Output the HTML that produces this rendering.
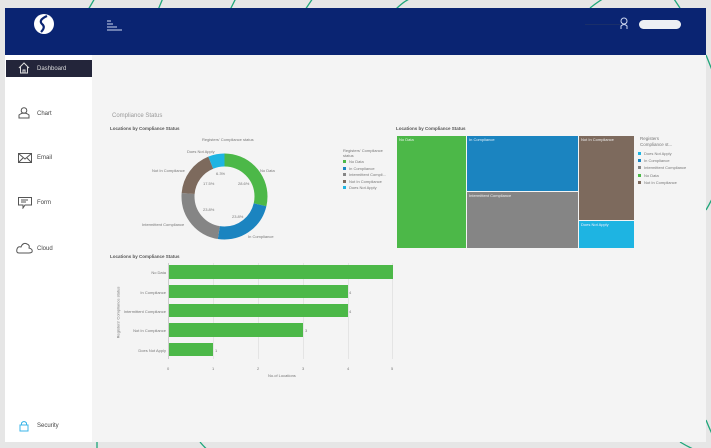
<!DOCTYPE html>
<html><head><meta charset="utf-8"><style>
*{margin:0;padding:0;box-sizing:border-box}
body{width:711px;height:448px;background:#e6e6e6;position:relative;overflow:hidden;font-family:"Liberation Sans",sans-serif;color:#555}
.abs{position:absolute}
.t{position:absolute;font-size:4px;color:#777;white-space:nowrap}
.nav{position:absolute;left:37px;font-size:6px;color:#444}
</style></head><body>
<svg class="abs" style="left:0;top:0" width="711" height="448">
<g fill="none" stroke="#1fa67a" stroke-width="1.3">
<path d="M88 10 L95 -2"/><path d="M158 10 L163 -2"/><path d="M230 10 L236 -2"/><path d="M305 10 L313 -2"/><path d="M395 10 Q405 0 412 -2"/>
<path d="M590 8 Q600 0 608 -4"/><path d="M680 8 L672 -4"/>
<path d="M706 55 Q712 70 716 80"/><path d="M706 210 Q712 200 716 190"/><path d="M706 420 Q710 430 714 438"/>
<path d="M97 442 L97 452"/><path d="M200 442 Q205 448 210 452"/><path d="M680 442 Q690 448 700 452"/>
</g></svg>
<div class="abs" style="left:5px;top:8px;width:701px;height:47px;background:#0a2472"></div>
<div class="abs" style="left:5px;top:55px;width:87px;height:387px;background:#fff"></div>
<div class="abs" style="left:92px;top:55px;width:614px;height:387px;background:#f4f4f4"></div>
<!-- logo -->
<svg class="abs" style="left:33px;top:13px" width="22" height="22"><circle cx="11" cy="11" r="10" fill="#fff"/><path d="M14 3 Q5 7 9 11 Q13 14 8 19" stroke="#0a2472" stroke-width="2.2" fill="none"/></svg>
<svg class="abs" style="left:107px;top:20px" width="16" height="12"><g stroke="#cfd8f0" stroke-width="1"><line x1="0" y1="1" x2="4" y2="1"/><line x1="0" y1="4" x2="6" y2="4"/><line x1="0" y1="7" x2="10" y2="7"/><line x1="0" y1="10" x2="15" y2="10"/></g></svg>
<div class="abs" style="left:585px;top:24px;width:35px;height:1px;background:#1a2f6a"></div>
<svg class="abs" style="left:620px;top:17px" width="10" height="13"><circle cx="4" cy="4" r="3" fill="none" stroke="#cfd8f0" stroke-width="1"/><path d="M1 12 V9 Q4 6 7 9 V12" fill="none" stroke="#cfd8f0" stroke-width="1"/></svg>
<div class="abs" style="left:639px;top:20px;width:42px;height:9px;border-radius:5px;background:#eef0f4"></div>
<!-- sidebar -->
<div class="abs" style="left:6px;top:60px;width:86px;height:17px;background:#23253a"></div>
<svg class="abs" style="left:18px;top:62px" width="12" height="12"><path d="M1 6 L6 1 L11 6 M2.5 5 V11 H9.5 V5 M5 11 V8 H7 V11" fill="none" stroke="#ddd" stroke-width="1"/></svg>
<div class="nav" style="top:66px;color:#ddd">Dashboard</div>
<svg class="abs" style="left:18px;top:107px" width="12" height="12"><circle cx="6" cy="3.5" r="2.8" fill="none" stroke="#555"/><path d="M1 11 V8 Q6 4 11 8 V11 Z" fill="none" stroke="#555"/></svg>
<div class="nav" style="top:111px">Chart</div>
<svg class="abs" style="left:18px;top:153px" width="14" height="10"><rect x="0.5" y="0.5" width="13" height="9" fill="none" stroke="#555"/><path d="M0.5 0.5 L7 6 L13.5 0.5 M0.5 9.5 L5 5 M13.5 9.5 L9 5" fill="none" stroke="#555"/></svg>
<div class="nav" style="top:155px">Email</div>
<svg class="abs" style="left:18px;top:197px" width="14" height="12"><path d="M0.5 0.5 H13.5 V8 H7 L5 11 V8 H0.5 Z M3 3 H10 M3 5 H8" fill="none" stroke="#555"/></svg>
<div class="nav" style="top:200px">Form</div>
<svg class="abs" style="left:16px;top:242px" width="18" height="12"><path d="M3 11 Q0 11 1 7 Q2 4 5 5 Q7 0 11 2 Q14 3 13 6 Q17 7 16 10 Q15 11 13 11 Z" fill="none" stroke="#555"/></svg>
<div class="nav" style="top:246px">Cloud</div>
<svg class="abs" style="left:19px;top:420px" width="10" height="12"><path d="M2.5 5 V3 Q5 0 7.5 3 V5" fill="none" stroke="#3bb5e8"/><rect x="1" y="5" width="8" height="6" fill="none" stroke="#3bb5e8"/></svg>
<div class="nav" style="top:423px">Security</div>
<!-- content -->
<div class="abs" style="left:112px;top:113px;font-size:6px;color:#999">Compliance Status</div>
<div class="abs" style="left:110px;top:126px;font-size:4.5px;font-weight:bold;color:#555">Locations by Compliance Status</div>
<svg class="abs" style="left:180px;top:152px" width="90" height="90"><g transform="rotate(-90 44.5 44.5)" fill="none" stroke-width="13">
<circle cx="44.5" cy="44.5" r="36.5" stroke="#4cb848" stroke-dasharray="65.6 300"/>
<circle cx="44.5" cy="44.5" r="36.5" stroke="#1b84c0" stroke-dasharray="0 65.6 54.6 300"/>
<circle cx="44.5" cy="44.5" r="36.5" stroke="#858585" stroke-dasharray="0 120.2 54.6 300"/>
<circle cx="44.5" cy="44.5" r="36.5" stroke="#7d6a5d" stroke-dasharray="0 174.8 40.1 300"/>
<circle cx="44.5" cy="44.5" r="36.5" stroke="#1eb4e2" stroke-dasharray="0 214.9 14.4 300"/></g></svg>
<div class="t" style="left:202px;top:137px">Registers' Compliance status</div>
<div class="t" style="left:187px;top:149px">Does Not Apply</div>
<div class="t" style="left:152px;top:168px">Not In Compliance</div>
<div class="t" style="left:260px;top:168px">No Data</div>
<div class="t" style="left:142px;top:222px">Intermittent Compliance</div>
<div class="t" style="left:248px;top:234px">In Compliance</div>
<div class="t" style="left:216px;top:171px">6.3%</div>
<div class="t" style="left:203px;top:181px">17.5%</div>
<div class="t" style="left:238px;top:181px">28.6%</div>
<div class="t" style="left:203px;top:207px">23.8%</div>
<div class="t" style="left:232px;top:214px">23.8%</div>
<div class="t" style="left:343px;top:148px;line-height:5px">Registers' Compliance<br>status</div>
<div class="abs" style="left:343px;top:159px;font-size:4px;color:#777;line-height:6.5px">
<div><span style="display:inline-block;width:3px;height:3px;background:#4cb848;margin-right:3px"></span>No Data</div>
<div><span style="display:inline-block;width:3px;height:3px;background:#1b84c0;margin-right:3px"></span>In Compliance</div>
<div><span style="display:inline-block;width:3px;height:3px;background:#858585;margin-right:3px"></span>Intermittent Compli...</div>
<div><span style="display:inline-block;width:3px;height:3px;background:#7d6a5d;margin-right:3px"></span>Not In Compliance</div>
<div><span style="display:inline-block;width:3px;height:3px;background:#1eb4e2;margin-right:3px"></span>Does Not Apply</div></div>
<!-- treemap -->
<div class="abs" style="left:396px;top:126px;font-size:4.5px;font-weight:bold;color:#555">Locations by Compliance Status</div>
<div class="abs" style="left:397px;top:136px;width:69px;height:112px;background:#4cb848"></div>
<div class="abs" style="left:467px;top:136px;width:111px;height:55px;background:#1b84c0"></div>
<div class="abs" style="left:467px;top:192px;width:111px;height:56px;background:#858585"></div>
<div class="abs" style="left:579px;top:136px;width:55px;height:84px;background:#7d6a5d"></div>
<div class="abs" style="left:579px;top:221px;width:55px;height:27px;background:#1eb4e2"></div>
<div class="t" style="left:399px;top:137px;color:#e8f5e8">No Data</div>
<div class="t" style="left:469px;top:137px;color:#e0eef8">In Compliance</div>
<div class="t" style="left:469px;top:193px;color:#eee">Intermittent Compliance</div>
<div class="t" style="left:581px;top:137px;color:#eee">Not In Compliance</div>
<div class="t" style="left:581px;top:222px;color:#eef">Does Not Apply</div>
<div class="t" style="left:640px;top:136px;font-size:4.5px;line-height:5.5px">Registers<br>Compliance st...</div>
<div class="abs" style="left:638px;top:150px;font-size:4px;color:#777;line-height:7.2px">
<div><span style="display:inline-block;width:3px;height:3px;background:#1eb4e2;margin-right:3px"></span>Does Not Apply</div>
<div><span style="display:inline-block;width:3px;height:3px;background:#1b84c0;margin-right:3px"></span>In Compliance</div>
<div><span style="display:inline-block;width:3px;height:3px;background:#858585;margin-right:3px"></span>Intermittent Compliance</div>
<div><span style="display:inline-block;width:3px;height:3px;background:#4cb848;margin-right:3px"></span>No Data</div>
<div><span style="display:inline-block;width:3px;height:3px;background:#7d6a5d;margin-right:3px"></span>Not In Compliance</div></div>
<!-- bar chart -->
<div class="abs" style="left:110px;top:254px;font-size:4.5px;font-weight:bold;color:#555">Locations by Compliance Status</div>
<div class="abs" style="left:168px;top:263px;width:1px;height:96px;background:#ccc"></div>
<div class="abs" style="left:213px;top:263px;width:1px;height:96px;background:#e4e4e4"></div>
<div class="abs" style="left:258px;top:263px;width:1px;height:96px;background:#e4e4e4"></div>
<div class="abs" style="left:303px;top:263px;width:1px;height:96px;background:#e4e4e4"></div>
<div class="abs" style="left:348px;top:263px;width:1px;height:96px;background:#e4e4e4"></div>
<div class="abs" style="left:392px;top:263px;width:1px;height:96px;background:#e4e4e4"></div>
<div class="abs" style="left:169px;top:265px;width:224px;height:14px;background:#4cb848"></div>
<div class="abs" style="left:169px;top:285px;width:179px;height:13px;background:#4cb848"></div>
<div class="abs" style="left:169px;top:304px;width:179px;height:13px;background:#4cb848"></div>
<div class="abs" style="left:169px;top:323px;width:134px;height:14px;background:#4cb848"></div>
<div class="abs" style="left:169px;top:343px;width:44px;height:13px;background:#4cb848"></div>
<div class="t" style="right:545px;top:270px">No Data</div>
<div class="t" style="right:545px;top:290px">In Compliance</div>
<div class="t" style="right:545px;top:309px">Intermittent Compliance</div>
<div class="t" style="right:545px;top:328px">Not In Compliance</div>
<div class="t" style="right:545px;top:348px">Does Not Apply</div>
<div class="t" style="left:349px;top:290px">4</div><div class="t" style="left:349px;top:309px">4</div><div class="t" style="left:305px;top:328px">3</div><div class="t" style="left:215px;top:348px">1</div>
<div class="t" style="left:167px;top:366px">0</div><div class="t" style="left:212px;top:366px">1</div><div class="t" style="left:257px;top:366px">2</div><div class="t" style="left:302px;top:366px">3</div><div class="t" style="left:347px;top:366px">4</div><div class="t" style="left:391px;top:366px">5</div>
<div class="t" style="left:268px;top:373px">No.of Locations</div>
<div class="t" style="left:92px;top:310px;transform:rotate(-90deg);transform-origin:center">Registers' Compliance status</div>
</body></html>
